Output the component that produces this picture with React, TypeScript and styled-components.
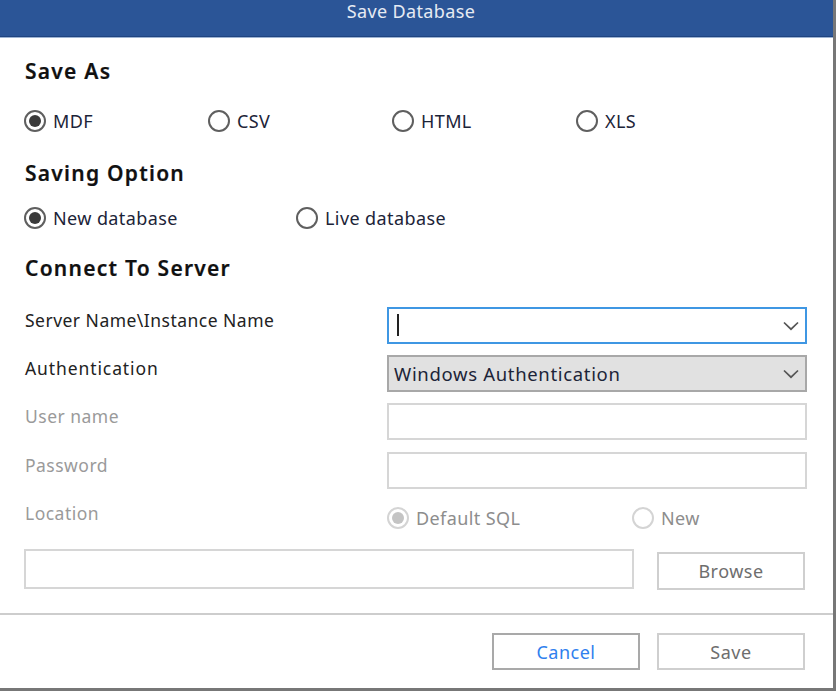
import React from "react";
import styled, { createGlobalStyle } from "styled-components";

const Global = createGlobalStyle`
  html, body { margin: 0; padding: 0; background: #fff; }
  #root { width: 838px; height: 691px; }
`;

const Dialog = styled.div`
  box-sizing: border-box;
  width: 836px;
  height: 691px;
  background: #fff;
  border-right: 3px solid #777;
  border-bottom: 3px solid #777;
  font-family: "Noto Sans", "Open Sans", sans-serif;
  font-size: 18px;
  color: #2a2a2a;
  display: flex;
  flex-direction: column;
`;

const TitleBar = styled.div`
  height: 37px;
  box-sizing: border-box;
  flex: none;
  background: #2b5597;
  border-bottom: 1px solid #1f4480;
  box-shadow: 0 1px 0 #9db3d3;
  color: #e6ebf3;
  font-size: 18px;
  letter-spacing: 0.35px;
  text-align: center;
  line-height: 23px;
  padding-right: 11px;
`;

const Body = styled.div`
  padding: 0 0 0 24px;
  flex: 1;
  display: flex;
  flex-direction: column;
`;

const Heading = styled.div<{ $top: number }>`
  margin-top: ${(p) => p.$top}px;
  padding-left: 1px;
  height: 28px;
  line-height: 28px;
  font-size: 21px;
  font-weight: 600;
  letter-spacing: 1.25px;
  color: #111;
  -webkit-text-stroke: 0.2px #111;
`;

const RadioRow = styled.div<{ $top: number; $col: number }>`
  margin-top: ${(p) => p.$top}px;
  height: 24px;
  display: grid;
  grid-template-columns: repeat(4, ${(p) => p.$col}px);
`;

const RadioItem = styled.label<{ $disabled?: boolean }>`
  display: flex;
  align-items: center;
  gap: 7px;
  font-size: 18px;
  letter-spacing: 0.4px;
  color: ${(p) => (p.$disabled ? "#8d8d8d" : "#1c2438")};
`;

const Circle = styled.span<{ $on?: boolean; $disabled?: boolean }>`
  box-sizing: border-box;
  width: 22px;
  height: 22px;
  flex: none;
  border-radius: 50%;
  border: 2px solid ${(p) => (p.$disabled ? "#d4d4d4" : "#5f5f5f")};
  background: #fff;
  display: flex;
  align-items: center;
  justify-content: center;
  &::after {
    content: "";
    display: ${(p) => (p.$on ? "block" : "none")};
    width: 12px;
    height: 12px;
    border-radius: 50%;
    background: ${(p) => (p.$disabled ? "#c4c4c4" : "#3a3a3a")};
  }
`;

const FormGrid = styled.div`
  margin-top: 25px;
  display: grid;
  grid-template-columns: 363px 420px;
  grid-auto-rows: 37px;
  row-gap: 11.2px;
`;

const FieldLabel = styled.div<{ $disabled?: boolean; $spread?: number }>`
  height: 26px;
  line-height: 26px;
  padding-left: 1px;
  font-size: 17.5px;
  letter-spacing: ${(p) => p.$spread ?? 0.48}px;
  color: ${(p) => (p.$disabled ? "#9a9a9a" : "#222")};
`;

const Field = styled.div<{ $variant?: "focus" | "select" }>`
  box-sizing: border-box;
  height: 37px;
  display: flex;
  align-items: center;
  justify-content: space-between;
  padding: 0 5px;
  font-size: 18.5px;
  letter-spacing: 0.67px;
  color: #1c2438;
  background: ${(p) => (p.$variant === "select" ? "#e1e1e1" : "#fff")};
  border: 2px solid
    ${(p) =>
      p.$variant === "focus"
        ? "#3f97e3"
        : p.$variant === "select"
          ? "#a8a8a8"
          : "#d6d6d6"};
`;

const Caret = styled.span`
  width: 2px;
  height: 22px;
  margin: 0 0 2px 3px;
  background: #222;
`;

const ChevronIcon = styled.svg`
  flex: none;
  margin: 1px 0 0 0;
`;

const InnerRadios = styled.div`
  display: grid;
  grid-template-columns: 245px auto;
  align-items: center;
  height: 37px;
`;

const PathRow = styled.div`
  margin-top: 12px;
  display: flex;
  align-items: flex-start;
`;

const PathInput = styled.div`
  box-sizing: border-box;
  width: 610px;
  height: 40px;
  background: #fff;
  border: 2px solid #d6d6d6;
`;

const Button = styled.button<{ $accent?: boolean; $dark?: boolean }>`
  box-sizing: border-box;
  width: 148px;
  background: #fff;
  border: 2px solid ${(p) => (p.$dark ? "#a9a9a9" : "#cfcfcf")};
  font-family: inherit;
  font-size: 18px;
  letter-spacing: 0.5px;
  padding: 0;
  color: ${(p) => (p.$accent ? "#2f80ee" : "#6e6e6e")};
`;

const BrowseButton = styled(Button)`
  height: 38px;
  margin: 3px 0 0 23px;
`;

const Divider = styled.div`
  height: 2px;
  background: #cdcdcd;
  flex: none;
`;

const Footer = styled.div`
  flex: none;
  height: 73px;
  box-sizing: border-box;
  display: flex;
  justify-content: flex-end;
  gap: 17px;
  padding: 18px 28px 18px 0;
`;

const FooterButton = styled(Button)`
  height: 37px;
`;

const Chevron = () => (
  <ChevronIcon width="18" height="10" viewBox="0 0 18 10" fill="none">
    <path d="M2 1.5 L9 8.2 L16 1.5" stroke="#555" strokeWidth="1.7" />
  </ChevronIcon>
);

const Radio = ({
  label,
  on,
  disabled,
}: {
  label: string;
  on?: boolean;
  disabled?: boolean;
}) => (
  <RadioItem $disabled={disabled}>
    <Circle $on={on} $disabled={disabled} />
    {label}
  </RadioItem>
);

export default function App() {
  return (
    <Dialog>
      <Global />
      <TitleBar>Save Database</TitleBar>
      <Body>
        <Heading $top={20}>Save As</Heading>
        <RadioRow $top={24} $col={184}>
          <Radio label="MDF" on />
          <Radio label="CSV" />
          <Radio label="HTML" />
          <Radio label="XLS" />
        </RadioRow>
        <Heading $top={26}>Saving Option</Heading>
        <RadioRow $top={19} $col={272}>
          <Radio label="New database" on />
          <Radio label="Live database" />
        </RadioRow>
        <Heading $top={24}>Connect To Server</Heading>
        <FormGrid>
          <FieldLabel>Server Name\Instance Name</FieldLabel>
          <Field $variant="focus">
            <Caret />
            <Chevron />
          </Field>
          <FieldLabel $spread={0.9}>Authentication</FieldLabel>
          <Field $variant="select">
            Windows Authentication
            <Chevron />
          </Field>
          <FieldLabel $disabled>User name</FieldLabel>
          <Field />
          <FieldLabel $disabled>Password</FieldLabel>
          <Field />
          <FieldLabel $disabled>Location</FieldLabel>
          <InnerRadios>
            <Radio label="Default SQL" on disabled />
            <Radio label="New" disabled />
          </InnerRadios>
        </FormGrid>
        <PathRow>
          <PathInput />
          <BrowseButton>Browse</BrowseButton>
        </PathRow>
      </Body>
      <Divider />
      <Footer>
        <FooterButton $accent $dark>Cancel</FooterButton>
        <FooterButton>Save</FooterButton>
      </Footer>
    </Dialog>
  );
}
